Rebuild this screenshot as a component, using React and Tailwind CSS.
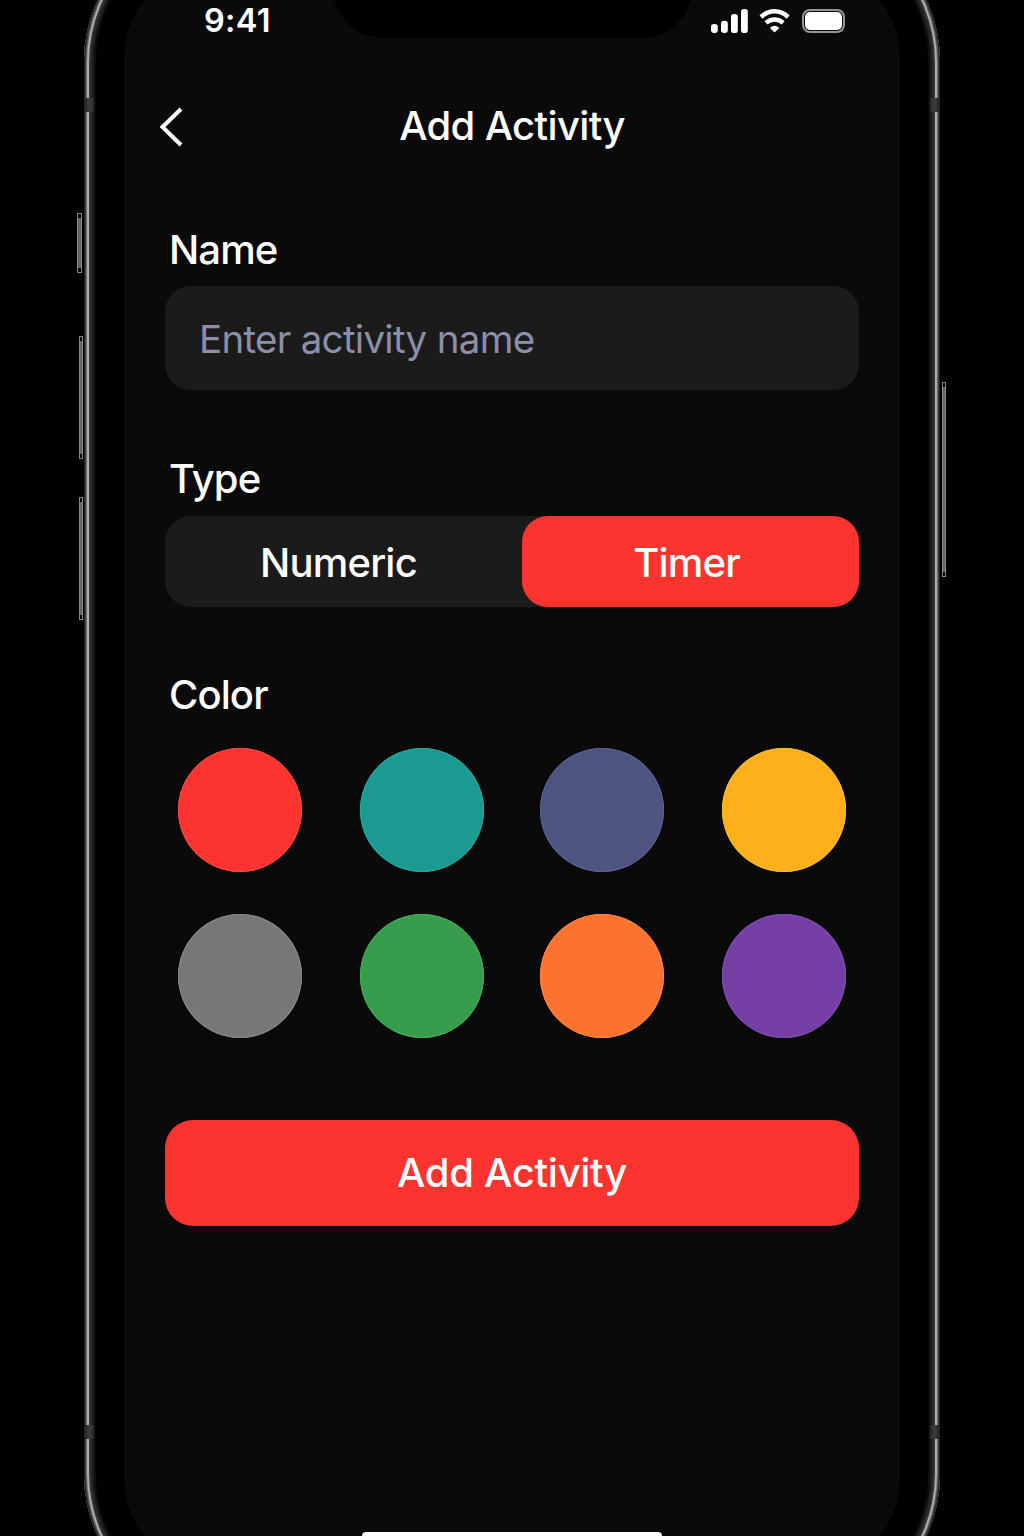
const colors = [
  ['Red', 'bg-[#fc342f] ring-[#ff4a40]'],
  ['Teal', 'bg-[#1a9a91] ring-[#25ab9f]'],
  ['Indigo', 'bg-[#4d547f] ring-[#5b6394]'],
  ['Yellow', 'bg-[#fdb01c] ring-[#ffbe2b]'],
  ['Gray', 'bg-[#777777] ring-[#8b8b8b]'],
  ['Green', 'bg-[#389c4d] ring-[#45b05b]'],
  ['Orange', 'bg-[#fb732e] ring-[#ff873c]'],
  ['Purple', 'bg-[#763fa6] ring-[#8650b8]'],
];

function StatusBar() {
  return (
    <div className="flex h-[42px] items-center justify-between pr-[55px] pl-[80px]">
      <span className="text-[32.5px] leading-[42px] font-semibold tracking-[0.3px]">9:41</span>
      <div className="flex items-center gap-[10px]">
        <svg width="38" height="26" viewBox="0 0 38 26" fill="white">
          <rect x="0" y="16" width="6.8" height="9" rx="3" />
          <rect x="10" y="12.8" width="6.8" height="12.2" rx="3" />
          <rect x="20" y="6" width="6.8" height="19" rx="2.8" />
          <rect x="30" y="1" width="6.8" height="24" rx="2.8" />
        </svg>
        <svg width="33" height="26" viewBox="0 0 33 26" fill="none">
          <path d="M2 8.9Q8.5 3.3 15.6 3.3T29.2 8.9" stroke="white" strokeWidth="4.6" />
          <path d="M7 14.9Q10.8 11.5 15.6 11.5T24.2 14.9" stroke="white" strokeWidth="4.4" />
          <path d="M12 20Q15.6 17 19.2 20L15.6 23.5Z" fill="white" stroke="white" strokeWidth="1.6" strokeLinejoin="round" />
        </svg>
        <div className="h-6 w-[43px] rounded-lg border-2 border-[#969696] p-px">
          <div className="h-full w-full rounded-[5px] bg-white" />
        </div>
      </div>
    </div>
  );
}

function Field({ label, children }) {
  return (
    <section className="flex flex-col">
      <h2 className="pl-1 text-[40px] leading-[48px] font-medium tracking-[-0.9px]">{label}</h2>
      {children}
    </section>
  );
}

function SideButton({ size }) {
  return (
    <div className={`flex border border-[#8a8a8a] ${size}`}>
      <div className="my-1 w-full bg-[#666666]" />
    </div>
  );
}

function AntennaBands() {
  return (
    <div className="flex justify-between">
      <div className="h-[14px] w-[10px] bg-[linear-gradient(90deg,#222,#3c3c3c,#2a2a2a)]" />
      <div className="h-[14px] w-[10px] bg-[linear-gradient(90deg,#2a2a2a,#3c3c3c,#222)]" />
    </div>
  );
}

export default function App() {
  return (
    <div className="flex h-[1536px] w-[1024px] overflow-hidden bg-black pl-[77px] font-['Inter','Liberation_Sans',sans-serif] text-white">
      <div className="flex w-[7px] shrink-0 flex-col items-center pt-[213px]">
        <SideButton size="h-[60px] w-[5px] self-start" />
        <div className="flex flex-col gap-[38px] pt-[63px]">
          <SideButton size="h-[123px] w-[4px]" />
          <SideButton size="h-[123px] w-[4px]" />
        </div>
      </div>

      {/* Device body, taller than the viewport so that its rounded ends run off it */}
      <div className="relative -mt-[88px] h-[1712px] w-[856px] shrink-0 rounded-[150px] px-10 py-12 shadow-[inset_0_0_0_1px_#1e1e1e,inset_0_0_0_2px_#404040,inset_0_0_0_3px_#6a6a6a,inset_0_0_0_5px_#aaaaaa,inset_0_0_0_6px_#3c3c3c,inset_0_0_0_8px_#2b2b2b,inset_0_0_0_10px_#1c1c1c,inset_0_0_0_12px_#0b0b0b]">
        <div className="pointer-events-none absolute inset-0 flex flex-col justify-between pt-[186px] pb-[185px]">
          <AntennaBands />
          <AntennaBands />
        </div>

        <div className="relative flex h-full flex-col overflow-hidden rounded-[100px] bg-[#0a0a0a] pt-10">
          <div className="absolute inset-x-0 top-0 mx-auto h-[78px] w-[359px] rounded-b-[50px] bg-black" />
          <div className="absolute inset-x-0 bottom-9 mx-auto h-2 w-[300px] rounded bg-white" />

          <StatusBar />
          <header className="mt-[60px] grid h-12 grid-cols-[1fr_auto_1fr] items-center px-[34px]">
            <button aria-label="Back">
              <svg width="26" height="42" viewBox="0 0 26 42" fill="none" stroke="white" strokeWidth="4">
                <path d="M23 4 L4.5 22 L23 40" />
              </svg>
            </button>
            <h1 className="text-[40px] leading-[48px] font-medium tracking-[-0.65px]">Add Activity</h1>
          </header>

          <form className="flex flex-col px-[41px] pt-[76px]" onSubmit={(e) => e.preventDefault()}>
            <Field label="Name">
              <div className="mt-3 flex h-[104px] items-center rounded-[26px] bg-[#1b1b1c] px-[34px]">
                <input
                  aria-label="Name"
                  placeholder="Enter activity name"
                  className="h-full w-full bg-transparent pt-0.5 text-[38.5px] tracking-[-0.7px] outline-none placeholder:text-[#8c8fa8]"
                />
              </div>
            </Field>

            <div className="pt-[65px]">
              <Field label="Type">
                <div className="mt-[13px] flex h-[91px] rounded-[26px] bg-[#1b1b1c] text-[40px] font-medium tracking-[-0.8px]">
                  <button type="button" className="w-[357px] pt-0.5 pr-[10px]">Numeric</button>
                  <button type="button" className="flex-1 rounded-[26px] bg-[#fc342f] pt-0.5 pr-2">Timer</button>
                </div>
              </Field>
            </div>

            <div className="pt-16">
              <Field label="Color">
                <div className="mt-[29px] grid grid-cols-[182px_180px_182px_124px] gap-y-[42px] pl-[13px]">
                  {colors.map(([name, color]) => (
                    <button
                      key={name}
                      type="button"
                      aria-label={name}
                      className={`size-[124px] rounded-full ring-1 ring-inset ${color}`}
                    />
                  ))}
                </div>
              </Field>
            </div>

            <button className="mt-[82px] h-[106px] rounded-[28px] bg-[#fc342f] text-[40px] font-medium tracking-[-0.3px]">
              Add Activity
            </button>
          </form>
        </div>
      </div>

      <div className="flex shrink-0 flex-col pt-[382px] pl-0.5">
        <SideButton size="h-[195px] w-[4px]" />
      </div>
    </div>
  );
}
